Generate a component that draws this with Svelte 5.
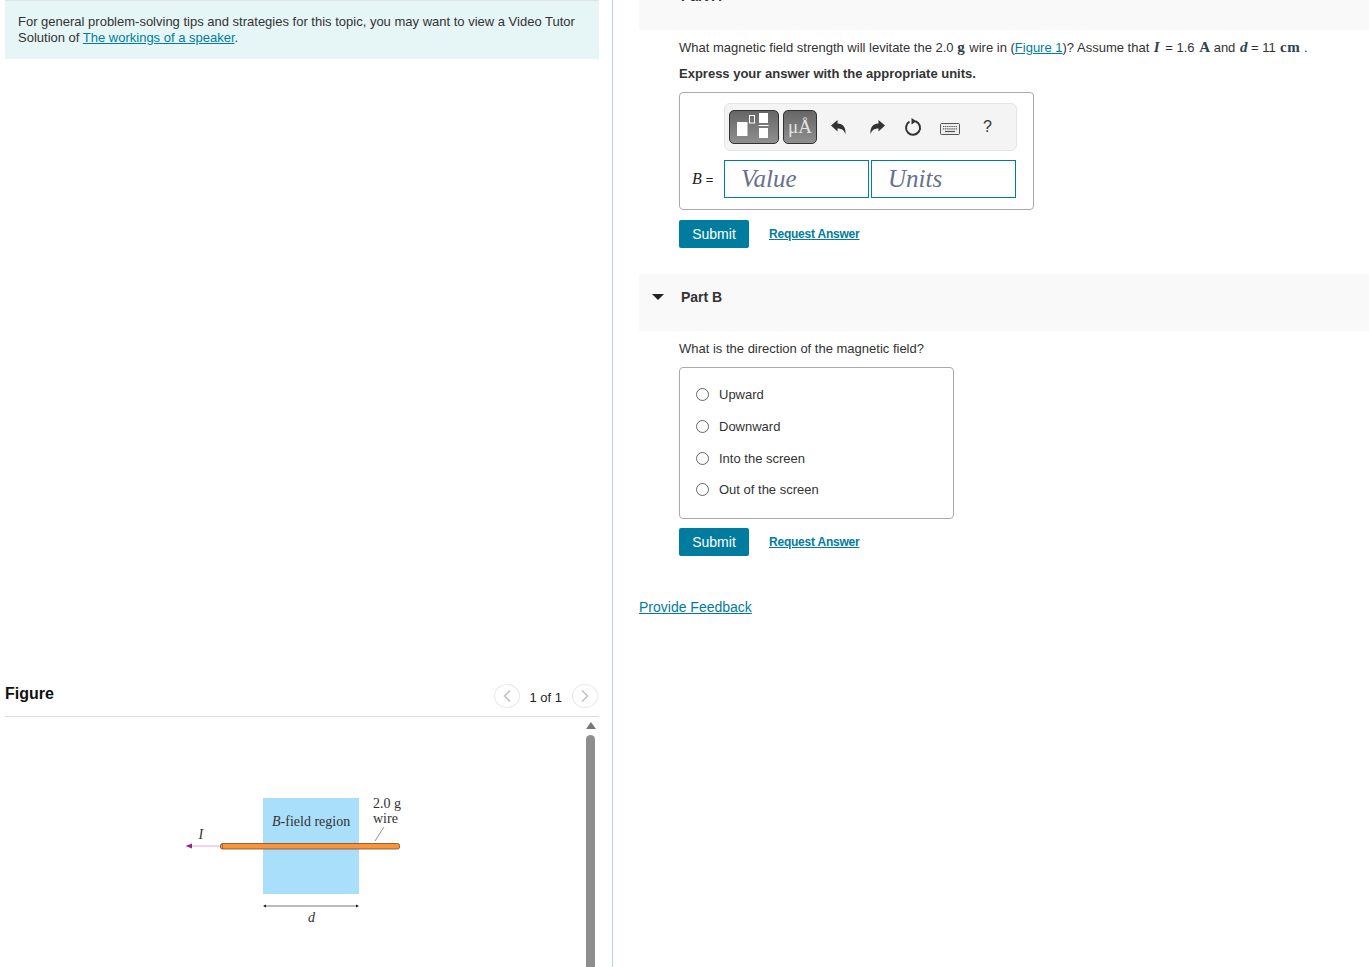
<script>
  const options = ['Upward', 'Downward', 'Into the screen', 'Out of the screen'];
</script>

<div class="page">
  <section class="left">
    <div class="hint">
      For general problem-solving tips and strategies for this topic, you may want to view a Video Tutor Solution of <a href="#a">The workings of a speaker</a>.
    </div>
    <div class="fig-head">
      <h2>Figure</h2>
      <div class="pager">
        <span class="circle">
          <svg width="12" height="14" viewBox="0 0 12 14"><path d="M9 1.500 3.500 7 9 12.500" fill="none" stroke="#c4c4c4" stroke-width="1.600"/></svg>
        </span>
        <span class="count">1 of 1</span>
        <span class="circle">
          <svg width="12" height="14" viewBox="0 0 12 14"><path d="M3 1.500 8.500 7 3 12.500" fill="none" stroke="#c4c4c4" stroke-width="1.600"/></svg>
        </span>
      </div>
    </div>
    <div class="fig-body">
      <svg class="figure" width="250" height="150" viewBox="0 0 250 150">
        <rect x="93" y="18" width="96" height="96" fill="#aadffb"/>
        <line x1="22" y1="66" x2="52" y2="66" stroke="#d5aedb" stroke-width="1"/>
        <path d="M15.500 66 22 63.500V68.500Z" fill="#93278f"/>
        <rect x="50.500" y="63.500" width="179" height="5.500" rx="2" fill="#f7943c" stroke="#7a4a20" stroke-width="0.800"/>
        <line x1="52.500" y1="63.500" x2="52.500" y2="69" stroke="#7a4a20" stroke-width="0.600"/>
        <line x1="205" y1="61" x2="214" y2="47" stroke="#777" stroke-width="0.800"/>
        <line x1="94" y1="126" x2="188" y2="126" stroke="#555" stroke-width="0.800"/>
        <path d="M93 126 96 124.500V127.500ZM189 126 186 124.500V127.500Z" fill="#222"/>
        <text x="102" y="45.500" class="ft"><tspan font-style="italic">B</tspan>-field region</text>
        <text x="203" y="28" class="ft">2.0 g</text>
        <text x="203" y="43" class="ft">wire</text>
        <text x="28.500" y="59" class="ft it">I</text>
        <text x="138" y="142" class="ft it">d</text>
      </svg>
      <div class="scroll">
        <span class="up"></span>
        <span class="thumb"></span>
      </div>
    </div>
  </section>

  <section class="right">
    <header class="part"><span class="tri"></span><h3>Part A</h3></header>
    <div class="content first">
      <p class="q">What magnetic field strength will levitate the 2.0 <b class="m g">g</b> wire in (<a href="#f">Figure 1</a>)? Assume that <b class="mi i">I</b> = 1.6 <b class="m a">A</b> and <b class="mi d">d</b> = 11 <b class="m cm">cm</b> .</p>
      <p class="express">Express your answer with the appropriate units.</p>
      <div class="answer">
        <div class="toolbar">
          <div class="tool wide">
            <svg width="46" height="32" viewBox="0 0 46 32">
              <rect x="6" y="11" width="10.500" height="14" fill="#fff"/>
              <rect x="18.500" y="4.500" width="5" height="7.500" fill="none" stroke="#fff" stroke-width="1"/>
              <rect x="28" y="2" width="9" height="10" fill="#fff"/>
              <rect x="27.500" y="14" width="10" height="1" fill="#fff"/>
              <rect x="28" y="17" width="9" height="10" fill="#fff"/>
            </svg>
          </div>
          <div class="tool narrow"><span>μÅ</span></div>
          <svg class="ic undo" width="18" height="20" viewBox="0 0 18 20"><path d="M1 7.500 7.500 2V5.500C13 5.500 16 9 15.500 16.500 14.500 12.500 12 10.500 7.500 10.500V13.500Z" fill="#333"/></svg>
          <svg class="ic redo" width="18" height="20" viewBox="0 0 18 20"><path d="M17 7.500 10.500 2V5.500C5 5.500 2 9 2.500 16.500 3.500 12.500 6 10.500 10.500 10.500V13.500Z" fill="#333"/></svg>
          <svg class="ic reset" width="18" height="20" viewBox="0 0 18 20"><path d="M11.500 4.200A7 7 0 1 1 5.500 4.700" fill="none" stroke="#333" stroke-width="2"/><path d="M7.500 1 12.500 4.300 7.500 7.500Z" fill="#333"/></svg>
          <svg class="ic keys" width="20" height="12" viewBox="0 0 20 12">
            <rect x="0.500" y="0.500" width="19" height="11" rx="1" fill="#eee" stroke="#555"/>
            <path d="M3 3.500H17M3 5.800H17" stroke="#555" stroke-width="1.200" stroke-dasharray="1.300 .8"/>
            <path d="M5 8.500H15" stroke="#555" stroke-width="1.200"/>
          </svg>
          <span class="help">?</span>
        </div>
        <div class="inputs">
          <span class="label"><i>B</i> <span class="eq">=</span></span>
          <div class="field">Value</div>
          <div class="field">Units</div>
        </div>
      </div>
      <div class="actions">
        <button>Submit</button>
        <a href="#r">Request Answer</a>
      </div>
    </div>

    <header class="part b"><span class="tri"></span><h3>Part B</h3></header>
    <div class="content">
      <p class="q second">What is the direction of the magnetic field?</p>
      <div class="choices">
        {#each options as o}
          <label class="choice"><span class="radio"></span>{o}</label>
        {/each}
      </div>
      <div class="actions tight">
        <button>Submit</button>
        <a href="#r">Request Answer</a>
      </div>
    </div>
    <a class="feedback" href="#p">Provide Feedback</a>
  </section>
</div>

<style>
  :global(body) {
    margin: 0;
    background: #fff;
  }
  .page {
    width: 1369px;
    height: 967px;
    overflow: hidden;
    display: grid;
    grid-template-columns: 613px 1fr;
    font-family: "Liberation Sans", Arial, sans-serif;
    font-size: 13px;
    color: #333;
  }
  a {
    color: #007c9e;
    text-decoration: underline;
  }
  .left {
    border-right: 1px solid #b9cfe2;
    padding: 0 13px 0 5px;
    height: 967px;
    box-sizing: border-box;
  }
  .hint {
    background: #e6f6f6;
    border-top: 1px solid #dfe3e6;
    padding: 13px 13px 0;
    box-sizing: border-box;
    height: 59px;
    line-height: 16px;
    width: 594px;
    margin-bottom: 617px;
  }
  .fig-head {
    display: flex;
    justify-content: space-between;
    align-items: center;
    width: 594px;
    height: 40px;
    border-bottom: 1px solid #ddd;
  }
  h2 {
    margin: 0;
    font-size: 16px;
    font-weight: 700;
    color: #111;
    position: relative;
    top: -2px;
  }
  .pager {
    display: flex;
    align-items: center;
    gap: 10px;
    margin-right: 1px;
    color: #222;
    position: relative;
  }
  .circle {
    width: 26px;
    height: 24px;
    box-sizing: border-box;
    border: 1px solid #e8e8e8;
    border-radius: 50%;
    display: flex;
    align-items: center;
    justify-content: center;
  }
  .count {
    position: relative;
    top: 1px;
    margin-left: -1px;
  }
  .fig-body {
    display: flex;
    width: 594px;
    height: 250px;
    justify-content: space-between;
    position: relative;
  }
  .figure {
    margin: 63px 0 0 165px;
  }
  .ft {
    font-family: "Liberation Serif", "Times New Roman", serif;
    font-size: 14px;
    fill: #333;
  }
  .ft.it {
    font-style: italic;
  }
  .scroll {
    width: 9px;
    margin-right: 4px;
    padding-top: 5px;
    display: flex;
    flex-direction: column;
    align-items: center;
    gap: 6px;
  }
  .up {
    width: 0;
    height: 0;
    border-left: 5px solid transparent;
    border-right: 5px solid transparent;
    border-bottom: 7px solid #777;
  }
  .thumb {
    width: 9px;
    height: 300px;
    background: #8e8e8e;
    border-radius: 5px 5px 0 0;
  }
  .right {
    padding-left: 26px;
    margin-top: -27px;
  }
  .part {
    height: 57px;
    background: #f9f9f9;
    display: flex;
    align-items: flex-start;
    padding: 15px 0 0 13px;
    box-sizing: border-box;
  }
  .tri {
    width: 0;
    height: 0;
    border-left: 6px solid transparent;
    border-right: 6px solid transparent;
    border-top: 6px solid #222;
    margin: 5px 17px 0 0;
  }
  h3 {
    margin: 0;
    font-size: 14px;
    line-height: 16px;
    font-weight: 700;
    color: #333;
  }
  .content {
    padding-left: 40px;
  }
  .first {
    height: 244px;
  }
  .q {
    margin: 0;
    line-height: 16px;
    padding-top: 9px;
    white-space: nowrap;
  }
  .m,
  .mi {
    font-family: "Liberation Serif", serif;
    font-size: 15px;
    color: #2f3f50;
  }
  .mi {
    font-style: italic;
  }
  .g { margin-right: 1px; }
  .i { margin: 0 2px 0 1px; }
  .a { margin-left: 1px; }
  .d { margin-left: 1px; }
  .cm { letter-spacing: 0.7px; margin-left: 0.5px; }
  .express {
    margin: 10px 0 10px;
    font-weight: 700;
    line-height: 16px;
  }
  .answer {
    width: 355px;
    height: 118px;
    box-sizing: border-box;
    border: 1px solid #aaa;
    border-radius: 4px;
    padding: 10px 17px 0 44px;
  }
  .toolbar {
    width: 293px;
    height: 48px;
    box-sizing: border-box;
    background: #f4f4f4;
    border: 1px solid #e4e4e4;
    border-radius: 6px;
    display: flex;
    align-items: center;
    padding-left: 4px;
    position: relative;
  }
  .tool {
    height: 34px;
    box-sizing: border-box;
    border: 1px solid #333;
    border-radius: 5px;
    background: linear-gradient(#666, #8f8f8f);
    display: flex;
    align-items: center;
    justify-content: center;
    margin-right: 4px;
  }
  .wide {
    width: 50px;
  }
  .narrow {
    width: 34px;
    color: #e2e2e2;
    font-family: "Liberation Serif", serif;
    font-size: 19px;
  }
  .ic {
    position: absolute;
  }
  .undo { left: 105px; top: 14px; }
  .redo { left: 143px; top: 14px; }
  .reset { left: 179px; top: 13px; }
  .keys { left: 215px; top: 19px; }
  .help {
    position: absolute;
    left: 258px;
    top: 14px;
    font-size: 16px;
    color: #333;
  }
  .inputs {
    display: flex;
    align-items: center;
    gap: 2px;
    margin: 9px 0 0 -32px;
  }
  .label {
    width: 30px;
    font-family: "Liberation Serif", serif;
    font-size: 16px;
    color: #222;
  }
  .eq {
    font-family: "Liberation Sans", sans-serif;
    font-size: 13px;
  }
  .field {
    width: 145px;
    height: 38px;
    box-sizing: border-box;
    border: 1px solid #007c9e;
    padding-left: 16px;
    font-family: "Liberation Serif", serif;
    font-style: italic;
    font-size: 25px;
    line-height: 36px;
    color: #66708c;
  }
  .actions {
    display: flex;
    align-items: center;
    gap: 20px;
    margin-top: 10px;
  }
  .tight {
    margin-top: 9px;
  }
  button {
    width: 70px;
    height: 28px;
    border: 0;
    border-radius: 2px;
    background: #007c9e;
    color: #fff;
    font-family: inherit;
    font-size: 14px;
    padding: 0;
  }
  .actions a {
    font-size: 12px;
    font-weight: 700;
    letter-spacing: -0.22px;
  }
  .second {
    padding-top: 10px;
  }
  .choices {
    width: 275px;
    height: 152px;
    margin-top: 10px;
    box-sizing: border-box;
    border: 1px solid #aaa;
    border-radius: 4px;
    padding-top: 11px;
  }
  .choice {
    display: flex;
    align-items: center;
    height: 31.700px;
    padding-left: 16px;
    gap: 10px;
  }
  .radio {
    width: 13px;
    height: 13px;
    box-sizing: border-box;
    border: 1px solid #666;
    border-radius: 50%;
    background: #fff;
  }
  .feedback {
    display: inline-block;
    margin-top: 43px;
    font-size: 14px;
    line-height: 16px;
  }
</style>
